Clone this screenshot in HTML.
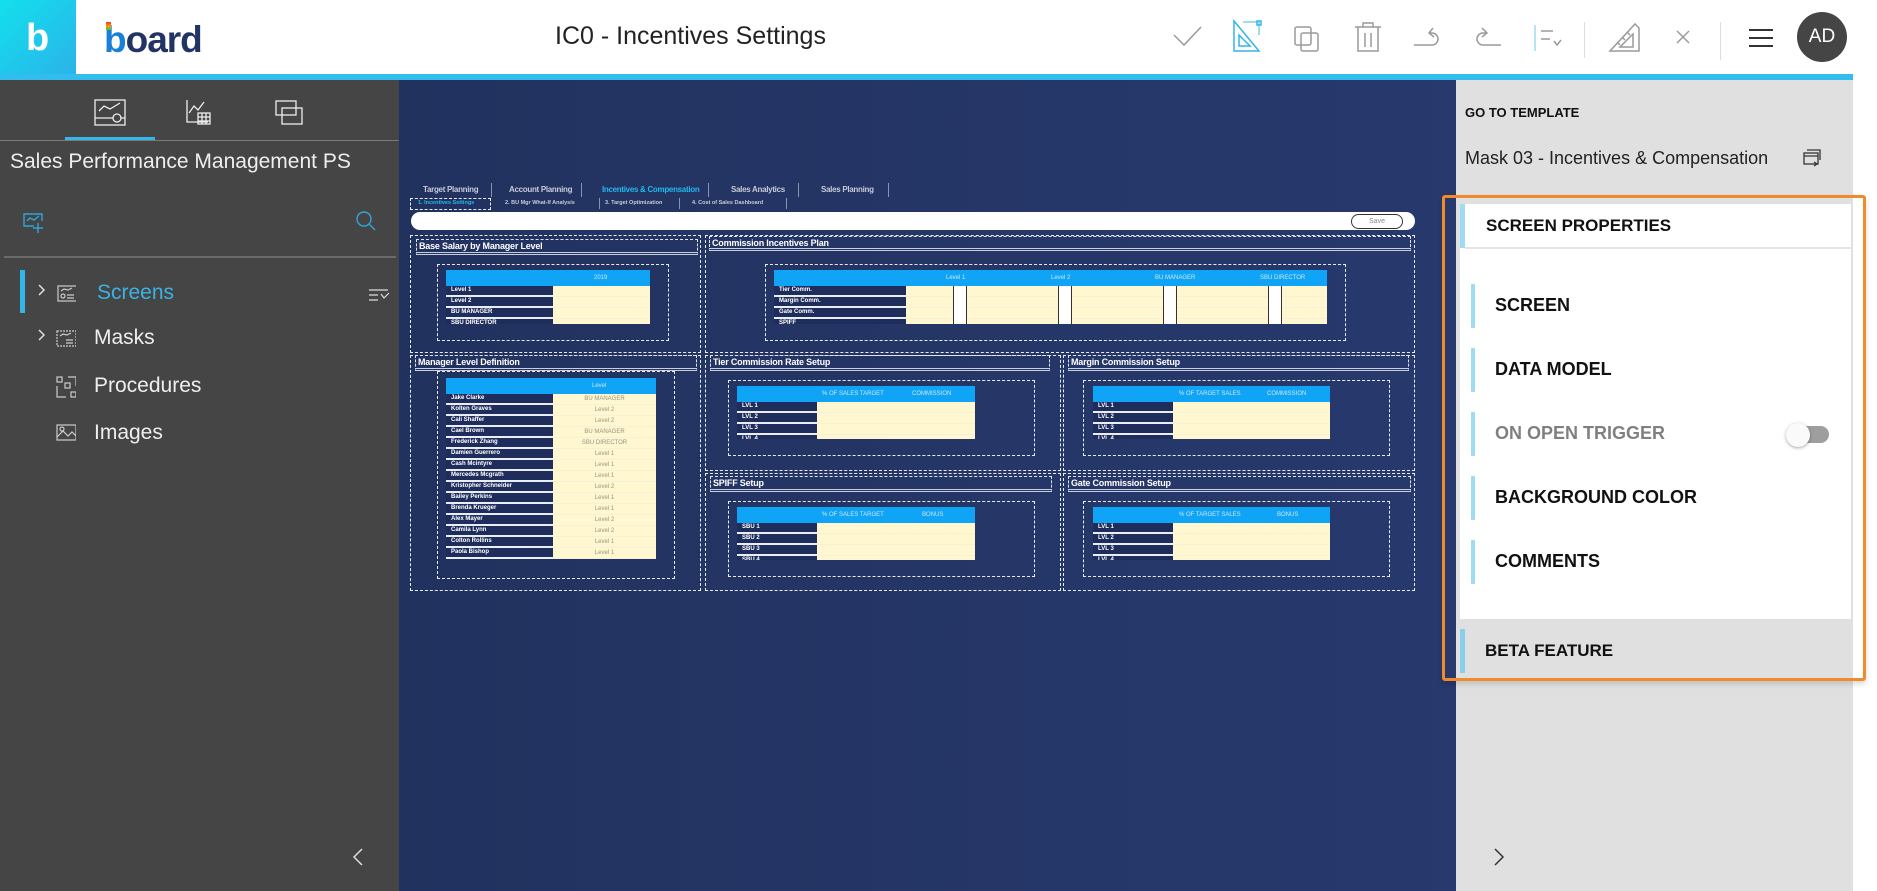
<!DOCTYPE html>
<html><head><meta charset="utf-8">
<style>
*{margin:0;padding:0;box-sizing:border-box}
body{width:1877px;height:891px;overflow:hidden;background:#fff;font-family:"Liberation Sans",sans-serif;position:relative}
.a{position:absolute}
.t{position:absolute;white-space:nowrap}
.side{left:0;top:80px;width:399px;height:811px;background:#454545}
.canvas{left:399px;top:80px;width:1057px;height:811px;background:linear-gradient(90deg,#22325f,#27396d)}
.rp{left:1456px;top:80px;width:397px;height:811px;background:#e0e0e0}
.dash{position:absolute;border:1px dashed #e8ecf5}
.ttl{position:absolute;border:1px dashed #dfe4ef;border-bottom:3px double #c9cfdd;color:#fff;font-weight:bold;font-size:9px;line-height:12px;padding-left:2px;white-space:nowrap;letter-spacing:-0.2px}
.tb{position:absolute}
.hd{background:#0fa4f5;height:16px;position:relative;color:#cfe9fb;font-size:6px}
.hd span{position:absolute;top:5px}
.row{height:11px;display:flex}
.row .l{background:#1f2d5c;border-bottom:2px solid #e9edf6;color:#fff;font-size:6px;line-height:9px;padding-left:5px;font-weight:bold;white-space:nowrap;overflow:hidden}
.row .v{background:#fff7cf;border-bottom:1px solid #f7f0d9;color:#9a9484;font-size:6px;line-height:10px;text-align:center;position:relative}
.tab{position:absolute;color:#c6cbd8;font-size:8px;font-weight:bold;white-space:nowrap;letter-spacing:-0.3px}
.sub{position:absolute;color:#c6cbd8;font-size:5.5px;font-weight:bold;white-space:nowrap}
.sep{position:absolute;width:1px;background:#8a93ad}
.item{position:absolute;left:1471px;width:4px;height:44px;background:#9fdcf3}
.it{position:absolute;left:1495px;font-weight:bold;font-size:18px;color:#111;white-space:nowrap}
.wc{position:absolute;top:16px;width:14px;height:40px;background:#fff;border-left:1px solid #333;border-right:1px solid #333}
</style></head><body>
<!-- header -->
<div class="a" style="left:0;top:0;width:76px;height:74px;background:linear-gradient(135deg,#12e0ec,#2bb3ea)"></div>
<div class="t" style="left:26px;top:18px;color:#fff;font-size:38px;font-weight:bold;line-height:40px">b</div>
<div class="t" style="left:104px;top:19px;font-size:37px;font-weight:bold;color:#223464;letter-spacing:-1px;line-height:42px"><span style="color:#1b7fd6">b</span>oard</div>
<div class="a" style="left:106px;top:22px;width:5px;height:8px;background:linear-gradient(#e33,#f90,#3c3)"></div>
<div class="t" style="left:555px;top:22px;font-size:25px;color:#222">IC0 - Incentives Settings</div>
<svg class="a" style="left:1160px;top:5px" width="420" height="65" fill="none" stroke="#9a9a9a" stroke-width="1.5">
<path d="M14 30 L24 40 L41 22"/>
<path d="M74 16 L74 46 L99 46 Z M79 30 L79 41 L90 41 Z" stroke="#33b5e8"/>
<path d="M83 17 H99 V30" stroke="#9fdcf3" stroke-width="2"/><rect x="97" y="16" width="4" height="4" stroke="#33b5e8"/>
<rect x="135" y="22" width="16" height="18" rx="2"/><rect x="141" y="28" width="17" height="18" rx="2"/>
<path d="M195 22 H221 M203 22 V18 H213 V22 M198 22 V46 H218 V22 M205 28 V42 M211 28 V42"/>
<path d="M254 40 H272 A6 6 0 0 0 272 28 H270 M273 23 L269 28 L274 32"/>
<path d="M341 40 H323 A6 6 0 0 1 323 28 H326 M322 23 L327 28 L322 32"/>
<path d="M375 20 V46" stroke="#9fdcf3"/><path d="M381 26 H393 M381 34 H390 M394 36 L397 40 L401 35"/>
</svg>
<div class="a" style="left:1584px;top:22px;width:1px;height:36px;background:#ddd"></div>
<svg class="a" style="left:1605px;top:18px" width="40" height="40" fill="none" stroke="#9a9a9a" stroke-width="1.5"><path d="M5 33 L30 6 L34 10 L34 33 Z M15 29 L28 16 L28 29 Z M12 24 l3 3 M17 19 l3 3 M22 14 l3 3"/></svg>
<svg class="a" style="left:1675px;top:29px" width="16" height="16" stroke="#9a9a9a" stroke-width="1.5"><path d="M2 2 L14 14 M14 2 L2 14"/></svg>
<div class="a" style="left:1720px;top:22px;width:1px;height:38px;background:#ddd"></div>
<svg class="a" style="left:1748px;top:28px" width="26" height="20" stroke="#333" stroke-width="2"><path d="M1 2 H25 M1 10 H25 M1 18 H25"/></svg>
<div class="a" style="left:1797px;top:12px;width:50px;height:50px;border-radius:50%;background:#454545;color:#fff;font-size:19px;text-align:center;line-height:50px">AD</div>
<div class="a" style="left:76px;top:74px;width:1777px;height:6px;background:#33bdef"></div>
<div class="a" style="left:0;top:74px;width:76px;height:6px;background:#33bdef"></div>

<!-- sidebar -->
<div class="a side"></div>
<svg class="a" style="left:90px;top:98px" width="230" height="30" fill="none" stroke="#eee" stroke-width="1.3">
<rect x="5" y="2" width="30" height="25"/><path d="M5 20 H35 M9 13 L14 8 L20 11 L30 5"/><circle cx="27" cy="20" r="4" fill="#454545"/>
<path d="M97 2 V24 H118 M99 15 L104 8 L108 12 L114 4"/><rect x="108" y="15" width="12" height="11"/><path d="M108 19 H120 M108 23 H120 M112 15 V26 M116 15 V26"/>
<rect x="186" y="3" width="20" height="14"/><rect x="192" y="10" width="20" height="16"/>
</svg>
<div class="a" style="left:65px;top:137px;width:90px;height:3px;background:#35b7ec"></div>
<div class="a" style="left:0;top:140px;width:399px;height:1px;background:#7a7a7a"></div>
<div class="t" style="left:10px;top:150px;color:#eee;font-size:21px">Sales Performance Management PS</div>
<svg class="a" style="left:22px;top:212px" width="24" height="22" fill="none" stroke="#2fa6d9" stroke-width="1.4"><path d="M12 14 H2 V2 H20 V9 M5 9 L8 6 L12 8 L17 4 M16 11 V21 M11 16 H21"/></svg>
<svg class="a" style="left:355px;top:210px" width="22" height="22" fill="none" stroke="#2fa6d9" stroke-width="1.4"><circle cx="9" cy="9" r="7"/><path d="M14 14 L20 20"/></svg>
<div class="a" style="left:4px;top:256px;width:392px;height:2px;background:#6a6a6a"></div>
<div class="a" style="left:20px;top:270px;width:5px;height:43px;background:#33b5e8"></div>
<svg class="a" style="left:36px;top:282px" width="12" height="70" fill="none" stroke="#ddd" stroke-width="1.5"><path d="M3 3 L8 8 L3 13 M3 48 L8 53 L3 58"/></svg>
<svg class="a" style="left:52px;top:280px" width="24" height="170" fill="none" stroke="#ccc" stroke-width="1.2">
<rect x="6" y="6" width="19" height="15"/><path d="M9 11 L12 9 L16 10 L20 8 M15 15 H22 M15 18 H22"/><circle cx="11" cy="16" r="2"/>
<rect x="5" y="51" width="19" height="15" stroke-dasharray="2 1"/><path d="M8 56 L11 54 L15 55 L19 53 M14 60 H21 M14 63 H21"/>
<rect x="5" y="97" width="5" height="5"/><rect x="13" y="103" width="5" height="5"/><rect x="19" y="112" width="5" height="5"/><path d="M5 106 V117 H14 M16 97 H24 V106"/>
<rect x="5" y="145" width="19" height="15"/><path d="M5 157 L11 151 L16 156 L20 152 L24 156"/><circle cx="10" cy="149" r="2"/>
</svg>
<div class="t" style="left:97px;top:281px;color:#3ab3e4;font-size:21px">Screens</div>
<svg class="a" style="left:368px;top:289px" width="22" height="12" fill="none" stroke="#ddd" stroke-width="1.2"><path d="M1 1 H20 M1 6 H10 M1 11 H10 M13 5 L16 9 L21 4"/></svg>
<div class="t" style="left:94px;top:326px;color:#eee;font-size:21px">Masks</div>
<div class="t" style="left:94px;top:374px;color:#eee;font-size:21px">Procedures</div>
<div class="t" style="left:94px;top:421px;color:#eee;font-size:21px">Images</div>
<svg class="a" style="left:352px;top:847px" width="12" height="20" fill="none" stroke="#ddd" stroke-width="1.5"><path d="M10 2 L2 10 L10 18"/></svg>

<!-- canvas -->
<div class="a canvas"></div>
<div class="tab" style="left:423px;top:185px">Target Planning</div><div class="sep" style="left:491px;top:183px;height:14px"></div>
<div class="tab" style="left:509px;top:185px">Account Planning</div><div class="sep" style="left:581px;top:183px;height:14px"></div>
<div class="tab" style="left:602px;top:185px;color:#22b8ee">Incentives &amp; Compensation</div><div class="sep" style="left:708px;top:183px;height:14px"></div>
<div class="tab" style="left:731px;top:185px">Sales Analytics</div><div class="sep" style="left:798px;top:183px;height:14px"></div>
<div class="tab" style="left:821px;top:185px">Sales Planning</div><div class="sep" style="left:888px;top:183px;height:14px"></div>
<div class="a" style="left:410px;top:198px;width:81px;height:12px;border:1px dashed #e8ecf5"></div>
<div class="sub" style="left:418px;top:200px;color:#22b8ee">1. Incentives Settings</div>
<div class="sub" style="left:505px;top:200px">2. BU Mgr What-If Analysis</div><div class="sep" style="left:599px;top:198px;height:11px"></div>
<div class="sub" style="left:605px;top:200px">3. Target Optimization</div><div class="sep" style="left:679px;top:198px;height:11px"></div>
<div class="sub" style="left:692px;top:200px">4. Cost of Sales Dashboard</div><div class="sep" style="left:786px;top:198px;height:11px"></div>
<div class="a" style="left:411px;top:212px;width:1004px;height:18px;background:#fff;border-radius:9px"></div>
<div class="a" style="left:1351px;top:214px;width:52px;height:15px;border:1px solid #333;border-radius:8px;font-size:7px;color:#888;text-align:center;line-height:13px">Save</div>

<!-- panels outer -->
<div class="dash" style="left:410px;top:235px;width:291px;height:118px"></div>
<div class="dash" style="left:705px;top:235px;width:710px;height:118px"></div>
<div class="dash" style="left:410px;top:355px;width:291px;height:236px"></div>
<div class="dash" style="left:705px;top:355px;width:356px;height:116px"></div>
<div class="dash" style="left:1063px;top:355px;width:352px;height:116px"></div>
<div class="dash" style="left:705px;top:473px;width:356px;height:118px"></div>
<div class="dash" style="left:1063px;top:473px;width:352px;height:118px"></div>
<div class="ttl" style="left:416px;top:239px;width:282px;height:16px">Base Salary by Manager Level</div>
<div class="ttl" style="left:709px;top:236px;width:702px;height:15px">Commission Incentives Plan</div>
<div class="ttl" style="left:415px;top:355px;width:282px;height:16px">Manager Level Definition</div>
<div class="ttl" style="left:710px;top:355px;width:340px;height:16px">Tier Commission Rate Setup</div>
<div class="ttl" style="left:1068px;top:355px;width:341px;height:16px">Margin Commission Setup</div>
<div class="ttl" style="left:710px;top:476px;width:342px;height:16px">SPIFF Setup</div>
<div class="ttl" style="left:1068px;top:476px;width:343px;height:16px">Gate Commission Setup</div>
<!-- inner dashed -->
<div class="dash" style="left:437px;top:264px;width:232px;height:77px"></div>
<div class="dash" style="left:765px;top:264px;width:581px;height:77px"></div>
<div class="dash" style="left:437px;top:371px;width:238px;height:208px"></div>
<div class="dash" style="left:728px;top:380px;width:307px;height:76px"></div>
<div class="dash" style="left:1083px;top:380px;width:307px;height:76px"></div>
<div class="dash" style="left:728px;top:501px;width:307px;height:76px"></div>
<div class="dash" style="left:1083px;top:501px;width:307px;height:76px"></div>

<!-- tables -->
<div class="tb" style="left:446px;top:270px;width:204px;height:54px;overflow:hidden">
<div class="hd"><span style="left:148px">2019</span></div>
<div class="row"><div class="l" style="width:107px">Level 1</div><div class="v" style="width:97px"></div></div>
<div class="row"><div class="l" style="width:107px">Level 2</div><div class="v" style="width:97px"></div></div>
<div class="row"><div class="l" style="width:107px">BU MANAGER</div><div class="v" style="width:97px"></div></div>
<div class="row"><div class="l" style="width:107px">SBU DIRECTOR</div><div class="v" style="width:97px"></div></div>
</div>
<div class="tb" style="left:774px;top:270px;width:553px;height:54px;overflow:hidden">
<div class="hd"><span style="left:172px">Level 1</span><span style="left:277px">Level 2</span><span style="left:381px">BU MANAGER</span><span style="left:486px">SBU DIRECTOR</span></div>
<div class="row"><div class="l" style="width:132px">Tier Comm.</div><div class="v" style="width:421px"></div></div>
<div class="row"><div class="l" style="width:132px">Margin Comm.</div><div class="v" style="width:421px"></div></div>
<div class="row"><div class="l" style="width:132px">Gate Comm.</div><div class="v" style="width:421px"></div></div>
<div class="row"><div class="l" style="width:132px">SPIFF</div><div class="v" style="width:421px"></div></div>
<div class="wc" style="left:179px"></div>
<div class="wc" style="left:284px"></div>
<div class="wc" style="left:389px"></div>
<div class="wc" style="left:494px"></div>
</div>
<div class="tb" style="left:446px;top:378px;width:210px">
<div class="hd"><span style="left:146px">Level</span></div>
<div class="row"><div class="l" style="width:107px">Jake Clarke</div><div class="v" style="width:103px">BU MANAGER</div></div>
<div class="row"><div class="l" style="width:107px">Kolten Graves</div><div class="v" style="width:103px">Level 2</div></div>
<div class="row"><div class="l" style="width:107px">Cali Shaffer</div><div class="v" style="width:103px">Level 2</div></div>
<div class="row"><div class="l" style="width:107px">Cael Brown</div><div class="v" style="width:103px">BU MANAGER</div></div>
<div class="row"><div class="l" style="width:107px">Frederick Zhang</div><div class="v" style="width:103px">SBU DIRECTOR</div></div>
<div class="row"><div class="l" style="width:107px">Damien Guerrero</div><div class="v" style="width:103px">Level 1</div></div>
<div class="row"><div class="l" style="width:107px">Cash Mcintyre</div><div class="v" style="width:103px">Level 1</div></div>
<div class="row"><div class="l" style="width:107px">Mercedes Mcgrath</div><div class="v" style="width:103px">Level 1</div></div>
<div class="row"><div class="l" style="width:107px">Kristopher Schneider</div><div class="v" style="width:103px">Level 2</div></div>
<div class="row"><div class="l" style="width:107px">Bailey Perkins</div><div class="v" style="width:103px">Level 1</div></div>
<div class="row"><div class="l" style="width:107px">Brenda Krueger</div><div class="v" style="width:103px">Level 1</div></div>
<div class="row"><div class="l" style="width:107px">Alex Mayer</div><div class="v" style="width:103px">Level 2</div></div>
<div class="row"><div class="l" style="width:107px">Camila Lynn</div><div class="v" style="width:103px">Level 2</div></div>
<div class="row"><div class="l" style="width:107px">Colton Rollins</div><div class="v" style="width:103px">Level 1</div></div>
<div class="row"><div class="l" style="width:107px">Paola Bishop</div><div class="v" style="width:103px">Level 1</div></div>
</div>
<div class="tb" style="left:737px;top:386px;width:238px;height:53px;overflow:hidden">
<div class="hd"><span style="left:85px">% OF SALES TARGET</span><span style="left:175px">COMMISSION</span></div>
<div class="row"><div class="l" style="width:80px">LVL 1</div><div class="v" style="width:158px"></div></div>
<div class="row"><div class="l" style="width:80px">LVL 2</div><div class="v" style="width:158px"></div></div>
<div class="row"><div class="l" style="width:80px">LVL 3</div><div class="v" style="width:158px"></div></div>
<div class="row"><div class="l" style="width:80px">LVL 4</div><div class="v" style="width:158px"></div></div>
</div>
<div class="tb" style="left:1093px;top:386px;width:237px;height:53px;overflow:hidden">
<div class="hd"><span style="left:86px">% OF TARGET SALES</span><span style="left:174px">COMMISSION</span></div>
<div class="row"><div class="l" style="width:80px">LVL 1</div><div class="v" style="width:157px"></div></div>
<div class="row"><div class="l" style="width:80px">LVL 2</div><div class="v" style="width:157px"></div></div>
<div class="row"><div class="l" style="width:80px">LVL 3</div><div class="v" style="width:157px"></div></div>
<div class="row"><div class="l" style="width:80px">LVL 4</div><div class="v" style="width:157px"></div></div>
</div>
<div class="tb" style="left:737px;top:507px;width:238px;height:53px;overflow:hidden">
<div class="hd"><span style="left:85px">% OF SALES TARGET</span><span style="left:185px">BONUS</span></div>
<div class="row"><div class="l" style="width:80px">SBU 1</div><div class="v" style="width:158px"></div></div>
<div class="row"><div class="l" style="width:80px">SBU 2</div><div class="v" style="width:158px"></div></div>
<div class="row"><div class="l" style="width:80px">SBU 3</div><div class="v" style="width:158px"></div></div>
<div class="row"><div class="l" style="width:80px">SBU 4</div><div class="v" style="width:158px"></div></div>
</div>
<div class="tb" style="left:1093px;top:507px;width:237px;height:53px;overflow:hidden">
<div class="hd"><span style="left:86px">% OF TARGET SALES</span><span style="left:184px">BONUS</span></div>
<div class="row"><div class="l" style="width:80px">LVL 1</div><div class="v" style="width:157px"></div></div>
<div class="row"><div class="l" style="width:80px">LVL 2</div><div class="v" style="width:157px"></div></div>
<div class="row"><div class="l" style="width:80px">LVL 3</div><div class="v" style="width:157px"></div></div>
<div class="row"><div class="l" style="width:80px">LVL 4</div><div class="v" style="width:157px"></div></div>
</div>

<!-- right panel -->
<div class="a rp"></div>
<div class="t" style="left:1465px;top:105px;font-size:13px;font-weight:bold;color:#111">GO TO TEMPLATE</div>
<div class="t" style="left:1465px;top:148px;font-size:18px;color:#222">Mask 03 - Incentives &amp; Compensation</div>
<svg class="a" style="left:1802px;top:148px" width="20" height="20" fill="none" stroke="#333" stroke-width="1.3"><rect x="2" y="5" width="14" height="11"/><path d="M5 2 H18 V12 M2 8 H16 M12 18 L15 16 L12 14"/></svg>
<div class="a" style="left:1442px;top:195px;width:424px;height:486px;border:3px solid #f18a2a;border-radius:3px;box-shadow:0 3px 6px rgba(0,0,0,0.15)"></div>
<div class="a" style="left:1460px;top:204px;width:391px;height:415px;background:#fff"></div>
<div class="a" style="left:1460px;top:204px;width:5px;height:44px;background:#9fdcf3"></div>
<div class="a" style="left:1465px;top:247px;width:386px;height:2px;background:#e4e4e4"></div>
<div class="t" style="left:1486px;top:216px;font-size:17px;font-weight:bold;color:#111">SCREEN PROPERTIES</div>
<div class="item" style="top:284px"></div><div class="it" style="top:295px">SCREEN</div>
<div class="item" style="top:348px"></div><div class="it" style="top:359px">DATA MODEL</div>
<div class="item" style="top:412px"></div><div class="it" style="top:423px;color:#808080">ON OPEN TRIGGER</div>
<div class="a" style="left:1792px;top:426px;width:37px;height:17px;border-radius:9px;background:#9e9e9e"></div>
<div class="a" style="left:1786px;top:423px;width:24px;height:24px;border-radius:50%;background:#fafafa;box-shadow:0 1px 3px rgba(0,0,0,0.35)"></div>
<div class="item" style="top:476px"></div><div class="it" style="top:487px">BACKGROUND COLOR</div>
<div class="item" style="top:540px"></div><div class="it" style="top:551px">COMMENTS</div>
<div class="a" style="left:1460px;top:629px;width:5px;height:44px;background:#87cfeb"></div>
<div class="t" style="left:1485px;top:641px;font-size:17px;font-weight:bold;color:#111">BETA FEATURE</div>
<svg class="a" style="left:1493px;top:847px" width="12" height="20" fill="none" stroke="#333" stroke-width="1.5"><path d="M2 2 L10 10 L2 18"/></svg>
</body></html>
